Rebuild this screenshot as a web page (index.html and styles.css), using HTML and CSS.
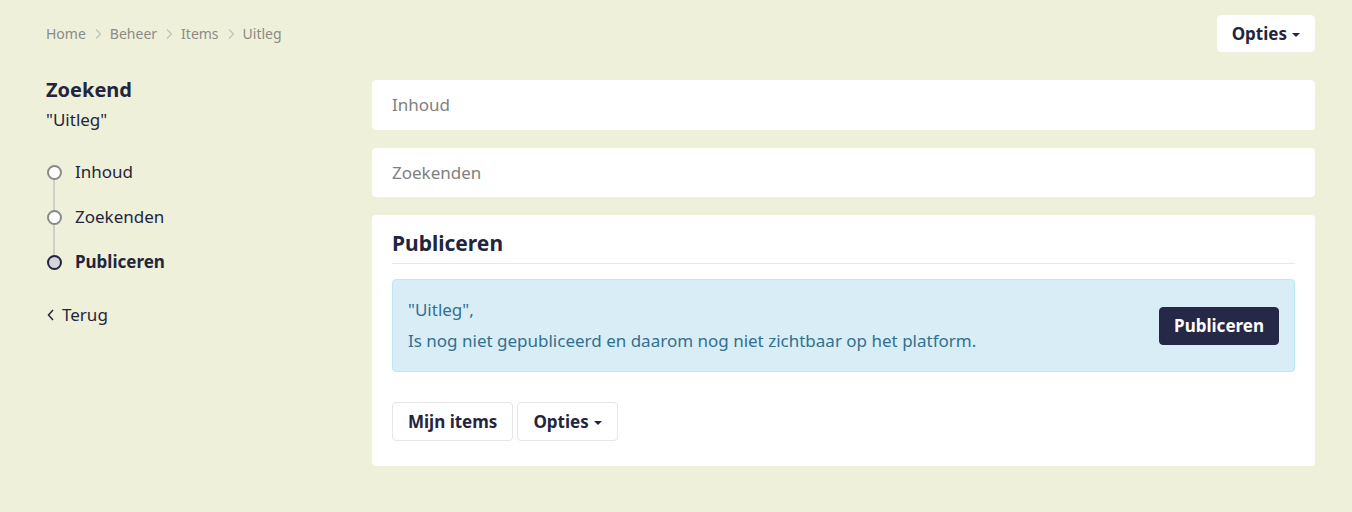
FILE: index.html
```html
<!DOCTYPE html>
<html lang="nl">
<head>
<meta charset="utf-8">
<title>Publiceren</title>
<link rel="stylesheet" href="styles.css">
</head>
<body>
<div class="page">
  <header class="topbar">
    <nav class="crumbs">
      <a href="#">Home</a><span class="sep"><svg width="8" height="12" viewBox="0 0 8 12"><path d="M2 1.5 6.5 6 2 10.5" fill="none" stroke="#c4c4bc" stroke-width="1.3"/></svg></span>
      <a href="#">Beheer</a><span class="sep"><svg width="8" height="12" viewBox="0 0 8 12"><path d="M2 1.5 6.5 6 2 10.5" fill="none" stroke="#c4c4bc" stroke-width="1.3"/></svg></span>
      <a href="#">Items</a><span class="sep"><svg width="8" height="12" viewBox="0 0 8 12"><path d="M2 1.5 6.5 6 2 10.5" fill="none" stroke="#c4c4bc" stroke-width="1.3"/></svg></span>
      <span>Uitleg</span>
    </nav>
    <button class="btn btn-white">Opties <span class="caret"></span></button>
  </header>
  <div class="layout">
    <aside class="side">
      <h1 class="side-title">Zoekend</h1>
      <div class="side-sub">"Uitleg"</div>
      <ul class="steps">
        <li class="step"><span class="dot"></span>Inhoud</li>
        <li class="step"><span class="dot"></span>Zoekenden</li>
        <li class="step active"><span class="dot"></span>Publiceren</li>
      </ul>
      <a class="back" href="#"><svg width="10" height="14" viewBox="0 0 10 14"><path d="M7 2 2.5 7 7 12" fill="none" stroke="#23253f" stroke-width="1.5"/></svg>Terug</a>
    </aside>
    <main class="main">
      <div class="card card-collapsed">Inhoud</div>
      <div class="card card-collapsed">Zoekenden</div>
      <div class="card card-open">
        <h2 class="card-title">Publiceren</h2>
        <div class="alert">
          <div class="alert-text">
            <p>"Uitleg",</p>
            <p>Is nog niet gepubliceerd en daarom nog niet zichtbaar op het platform.</p>
          </div>
          <button class="btn btn-dark">Publiceren</button>
        </div>
        <div class="actions">
          <button class="btn btn-outline">Mijn items</button>
          <button class="btn btn-outline">Opties <span class="caret"></span></button>
        </div>
      </div>
    </main>
  </div>
</div>
</body>
</html>
```
FILE: styles.css
```css
* { box-sizing: border-box; }
html, body { margin: 0; padding: 0; }
body {
  background: #eff0d9;
  font-family: "Noto Sans", "Open Sans", sans-serif;
  color: #23253f;
  font-size: 17px;
}
.page { padding: 15px 37px 0 46px; }
.topbar {
  display: flex;
  justify-content: space-between;
  align-items: center;
  height: 37px;
}
.crumbs {
  display: flex;
  align-items: center;
  font-size: 14px;
  color: #8a8a86;
}
.crumbs a { color: #8a8a86; text-decoration: none; }
.sep { display: inline-flex; margin: 0 8px 0 8px; }
.btn {
  font-family: inherit;
  font-weight: 700;
  font-size: 17px;
  border-radius: 4px;
  cursor: pointer;
  display: inline-flex;
  align-items: center;
  justify-content: center;
}
.btn-white {
  background: #fff;
  border: 1px solid #fff;
  color: #23253f;
  height: 37px;
  padding: 0 14px;
}
.caret {
  display: inline-block;
  width: 0; height: 0;
  border-left: 4px solid transparent;
  border-right: 4px solid transparent;
  border-top: 4px solid #23253f;
  margin-left: 5px;
  margin-top: 2px;
}
.layout {
  display: flex;
  margin-top: 28px;
}
.side { width: 326px; flex: none; }
.side-title {
  margin: 0;
  font-size: 20px;
  font-weight: 700;
  line-height: 20px;
}
.side-sub { margin-top: 9px; line-height: 22px; }
.steps {
  list-style: none;
  margin: 18px 0 0 0;
  padding: 0;
}
.step {
  position: relative;
  display: flex;
  align-items: center;
  height: 45px;
  padding-left: 29px;
  color: #23253f;
}
.step .dot {
  position: absolute;
  left: 1px;
  top: 50%;
  width: 15px; height: 15px;
  margin-top: -7px;
  border: 2px solid #8a8a8a;
  border-radius: 50%;
  background: #fff;
  z-index: 1;
}
.step:not(:last-child)::after {
  content: "";
  position: absolute;
  left: 7px;
  top: 50%;
  width: 2px;
  height: 45px;
  background: #cfcfcb;
}
.step.active { font-weight: 700; }
.step.active .dot { border-color: #23253f; background: #d3d4dd; }
.back {
  display: inline-flex;
  align-items: center;
  margin-top: 19px;
  color: #23253f;
  text-decoration: none;
  gap: 6px;
}
.main { flex: 1; display: flex; flex-direction: column; gap: 18px; }
.card {
  background: #fff;
  border-radius: 4px;
}
.card-collapsed {
  height: 50px;
  display: flex;
  align-items: center;
  padding: 0 20px 2px;
  color: #808080;
}
.card-collapsed + .card-collapsed { height: 49px; padding-bottom: 0; }
.card-open { padding: 14px 20px 25px; }
.card-title {
  margin: 0;
  font-size: 21px;
  font-weight: 700;
  line-height: 28px;
  padding-bottom: 6px;
  border-bottom: 1px solid #e8e8e8;
}
.alert {
  margin-top: 15px;
  background: #d9edf7;
  border: 1px solid #bce8f1;
  border-radius: 4px;
  color: #31708f;
  display: flex;
  align-items: center;
  justify-content: space-between;
  padding: 0 15px;
  height: 93px;
}
.alert-text { padding-bottom: 2px; }
.alert-text p { margin: 0; line-height: 31px; }
.btn-dark {
  background: #262848;
  border: 1px solid #262848;
  color: #fff;
  height: 38px;
  padding: 0 14px;
}
.actions { display: flex; gap: 4px; margin-top: 30px; }
.btn-outline {
  background: #fff;
  border: 1px solid #e6e6e6;
  color: #23253f;
  height: 39px;
  padding: 0 15px;
}
```
